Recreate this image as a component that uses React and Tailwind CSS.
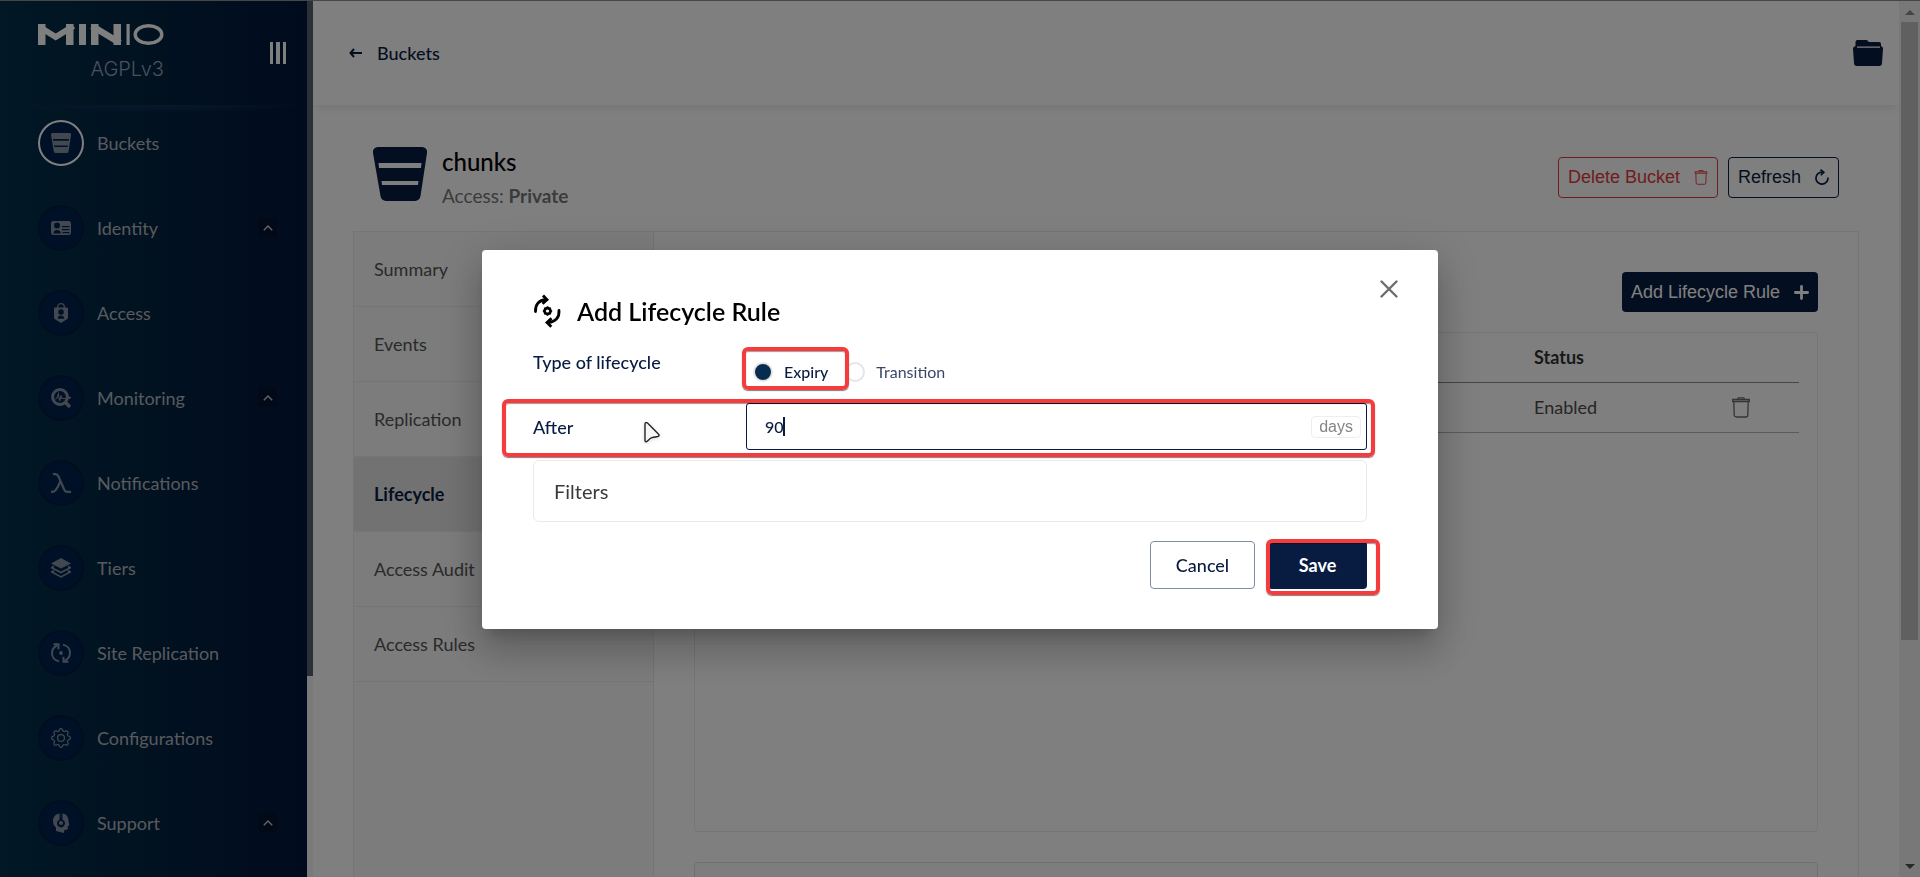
import React from "react";
import { BsGear } from "react-icons/bs";

const BucketIcon = ({ className }) => (
  <svg viewBox="0 0 54 54" className={className} fill="currentColor" aria-hidden="true">
    <path
      fillRule="evenodd"
      d="M5 0h44a5 5 0 0 1 5 6l-6.500 43a5.500 5.500 0 0 1-5.500 5H13a5.500 5.500 0 0 1-5.500-5L0 6a5 5 0 0 1 5-6zM5.500 16l.5 5h42l.500-5zM8.500 34l.5 4h36l.500-4z"
    />
  </svg>
);

const IdentityIcon = () => (
  <svg viewBox="0 0 20 20" className="size-5" fill="currentColor" aria-hidden="true">
    <path
      fillRule="evenodd"
      d="M2.500 3h15A2.500 2.500 0 0 1 20 5.500v9a2.500 2.500 0 0 1-2.500 2.500h-15A2.500 2.500 0 0 1 0 14.500v-9A2.500 2.500 0 0 1 2.500 3zM6 4.500a3 3 0 1 0 .01 6a3 3 0 0 0-.01-6zM2.500 15.500h7.300c0-2.200-1.600-3.500-3.800-3.500s-3.500 1.300-3.500 3.500zM11 8v1.200h7.500V8zM11 11v1.200h7.500V11zM11.500 14v1.200h7V14z"
    />
  </svg>
);

const AccessIcon = () => (
  <svg viewBox="0 0 20 20" className="size-5" fill="currentColor" aria-hidden="true">
    <path d="M6.700 5V3.600C6.700 1.800 8.200.7 10 .7s3.300 1.100 3.300 2.900V5" fill="none" stroke="currentColor" strokeWidth="1.300" />
    <path
      fillRule="evenodd"
      d="M4 4.400h12a1 1 0 0 1 1 1v9.300c0 .6-.2 1-.7 1.300L10 20l-6.300-4c-.5-.3-.7-.7-.7-1.300V5.400a1 1 0 0 1 1-1zM10 6.200a2.800 2.800 0 1 0 .01 5.600a2.800 2.800 0 0 0-.01-5.600zM6.800 15.800h6.400c0-2-1.200-3.200-3.200-3.200s-3.200 1.200-3.200 3.200z"
    />
  </svg>
);

const MonitoringIcon = () => (
  <svg viewBox="0 0 20 20" className="size-5" fill="none" stroke="currentColor" aria-hidden="true">
    <circle cx="9" cy="9" r="7.400" strokeWidth="3" />
    <path d="M14 14l5 5" strokeWidth="3.400" />
    <path d="M4.500 11l1.500-1 1.400-4 1.200 7 1.500-5 1 2.500h4l4-.500" strokeWidth="1.100" />
    <path d="M17 9.500h3" strokeWidth="1.500" />
  </svg>
);

const LambdaIcon = () => (
  <svg viewBox="0 0 20 20" className="size-5" fill="none" stroke="currentColor" strokeWidth="2.200" aria-hidden="true">
    <path d="M2 1.200h2.500c1.500 0 2.300.800 3 2.300l5.900 13.500c.7 1.500 1.600 1.900 3.100 1.900H20" />
    <path d="M9.300 8.500C7.500 13 5 18.800 1.800 18.800H0" />
  </svg>
);

const TiersIcon = () => (
  <svg viewBox="0 0 20 20" className="size-5" fill="none" stroke="currentColor" strokeWidth="1.700" aria-hidden="true">
    <path d="M10 0l10 5.400-10 5.200L0 5.400z" fill="currentColor" stroke="none" />
    <path d="M3 8.300L.8 9.700 10 14.500l9.200-4.800L17 8.300" />
    <path d="M3 12.500L.8 14 10 18.900l9.200-4.900-2.200-1.500" />
  </svg>
);

const ReplicationIcon = () => (
  <svg viewBox="0 0 20 20" className="size-5" fill="none" stroke="currentColor" strokeWidth="2" aria-hidden="true">
    <path d="M8 18.300C3.500 17.500 1 13.800 1 10.200 1 6.500 3 3.800 6.500 2" />
    <path d="M2.500 1.200h5v5" />
    <path d="M12 1.700c4.500.8 7 4.500 7 8.100 0 3.700-2 6.400-5.500 8.200" />
    <path d="M17.500 18.800h-5v-5" />
    <circle cx="10" cy="10" r="1.900" fill="currentColor" stroke="none" />
  </svg>
);

const GearIcon = () => <BsGear className="size-5" aria-hidden="true" />;

const SupportIcon = () => (
  <svg viewBox="0 0 20 20" className="size-5" fill="currentColor" aria-hidden="true">
    <path
      fillRule="evenodd"
      d="M8.500.5v6.200a4 4 0 1 0 3 0V.5c4 .5 6 3.500 6 7.500l.8 4.500-1.500.5v3.500l-3.600.5V20L5 18v-3.500C3 13 2 11 2 8 2 4 4.500 1 8.500.5z"
    />
    <path d="M10 8a2 2 0 1 0 .01 4a2 2 0 0 0-.01-4z" />
    <path d="M9.200 0h1.600v5H9.200z" opacity="0.200" />
  </svg>
);

const TrashIcon = ({ className }) => (
  <svg viewBox="0 0 18 21" className={className} fill="none" stroke="currentColor" strokeWidth="1.300" aria-hidden="true">
    <path d="M.7 2.500h16.600v2H.7z" />
    <path d="M5.500 2.200L6.200.8h5.600l.7 1.400" />
    <path d="M1.800 4.500l.4 13.500a2 2 0 0 0 2 2h9.600a2 2 0 0 0 2-2l.4-13.500" />
  </svg>
);

const Logo = () => (
  <svg viewBox="0 0 126 21" className="h-[21px] w-[126px]" fill="white" role="img" aria-label="MinIO">
    <rect x="0" y="0" width="7.500" height="21" />
    <rect x="28" y="0" width="7.500" height="21" />
    <polyline points="0,2 17.700,13 35.500,2" fill="none" stroke="white" strokeWidth="6" />
    <rect x="41" y="0" width="7" height="21" />
    <rect x="53" y="0" width="7.500" height="21" />
    <rect x="75.500" y="0" width="7.500" height="21" />
    <line x1="54" y1="2" x2="82" y2="19" stroke="white" strokeWidth="6.500" />
    <rect x="88.500" y="0" width="3.200" height="21" />
    <ellipse cx="110.500" cy="10.500" rx="13.300" ry="8.800" fill="none" stroke="white" strokeWidth="3.400" />
  </svg>
);

const LifecycleIcon = () => (
  <svg viewBox="0 0 28 34" className="h-[34px] w-7" fill="none" stroke="currentColor" strokeWidth="2.800" aria-hidden="true">
    <path d="M2.500 17.500C2 10.500 6 6 13 5.500" strokeLinecap="round" />
    <path d="M10 1.500l4 4.200-4.500 4" />
    <path d="M26 16.500C26.500 23.500 22.500 28 15.500 28.500" strokeLinecap="round" />
    <path d="M18.500 24.300l-4.500 4.200 4.300 4.300" />
    <circle cx="14.500" cy="17" r="3.100" strokeWidth="2.400" />
    <path d="M14.500 12.300v9.400M9.800 17h9.400M11.200 13.700l6.600 6.600M17.800 13.700l-6.600 6.600" strokeWidth="1.500" />
    <circle cx="14.500" cy="17" r="1.600" fill="white" stroke="none" />
  </svg>
);

const NAV = [
  { label: "Buckets", icon: () => <BucketIcon className="size-5" />, active: true },
  { label: "Identity", icon: IdentityIcon, group: true },
  { label: "Access", icon: AccessIcon },
  { label: "Monitoring", icon: MonitoringIcon, group: true },
  { label: "Notifications", icon: LambdaIcon },
  { label: "Tiers", icon: TiersIcon },
  { label: "Site Replication", icon: ReplicationIcon },
  { label: "Configurations", icon: GearIcon },
  { label: "Support", icon: SupportIcon, group: true },
];

const TABS = ["Summary", "Events", "Replication", "Lifecycle", "Access Audit", "Access Rules"];

function NavItem({ label, icon: Icon, active, group }) {
  return (
    <a href="#" className="flex h-[85px] shrink-0 items-center pr-[30px] pl-[38px] text-lg text-[#b0b4bc]">
      <span
        className={`flex size-[46px] shrink-0 items-center justify-center rounded-full border-2 bg-[#00204c] text-[#8290a0] ${
          active ? "border-white" : "border-[#001c40]"
        }`}
      >
        <Icon />
      </span>
      <span className="ml-[13px] grow">{label}</span>
      {group && (
        <span className="flex size-[19px] items-center justify-center rounded-xs bg-[#04122f] text-[#c4c8d0]">
          <svg viewBox="0 0 10 6" className="h-1.5 w-2.5" fill="none" stroke="currentColor" strokeWidth="1.400" aria-hidden="true">
            <path d="M.8 5.200L5 1l4.200 4.200" />
          </svg>
        </span>
      )}
    </a>
  );
}

function Sidebar() {
  return (
    <aside className="flex w-[313px] shrink-0">
      <div className="flex w-[307px] flex-col overflow-hidden bg-linear-to-r from-[#02304a] via-[#032341] to-[#02163c]">
        <div className="flex h-[104px] shrink-0 items-start justify-between pr-[21px] pl-[38px]">
          <div className="flex flex-col items-end pt-[23px]">
            <Logo />
            <span className="mt-2.5 font-[Inter] text-xl font-light text-[#97a2b4]">AGPLv3</span>
          </div>
          <button type="button" aria-label="Collapse menu" className="mt-[41px] flex h-[22px] gap-[3px]">
            <span className="w-[3px] bg-white" />
            <span className="w-[4px] bg-white" />
            <span className="w-[3px] bg-white" />
          </button>
        </div>
        <div className="h-2 shrink-0 bg-radial-[50%_100%_at_50%_0%] from-[#14305a] to-transparent" />
        <nav className="-mt-[13px] flex flex-col overflow-hidden">
          {NAV.map((item) => (
            <NavItem key={item.label} {...item} />
          ))}
        </nav>
      </div>
      <div className="w-1.5 bg-[#f4f4f4]">
        <div className="h-[77%] bg-[#575e70]" />
      </div>
    </aside>
  );
}

function BucketHeader() {
  return (
    <div className="flex h-[126px] shrink-0 items-center pt-3 pr-5 pl-5">
      <BucketIcon className="size-[54px] text-[#081c42]" />
      <div className="ml-[15px] grow pt-2">
        <h1 className="text-2xl leading-9 font-medium text-black">chunks</h1>
        <p className="text-[19px] leading-8 text-[#777]">
          Access: <strong className="font-bold">Private</strong>
        </p>
      </div>
      <div className="flex gap-2.5 pt-1.5 font-['Liberation_Sans',sans-serif] text-lg">
        <button type="button" className="flex h-[41px] items-center gap-3.5 rounded-sm border border-[#e03a3a] px-[9px] text-[#e03a3a]">
          Delete Bucket
          <TrashIcon className="h-[15px] w-[14px]" />
        </button>
        <button type="button" className="flex h-[41px] items-center gap-3.5 rounded-sm border border-[#081c42] px-[9px] text-[#081c42]">
          Refresh
          <svg viewBox="0 0 14 16" className="h-4 w-3.5" fill="none" stroke="currentColor" strokeWidth="1.700" aria-hidden="true">
            <path d="M12.900 8.500A6 6 0 1 1 7.500 3.200" />
            <path d="M5.500.7l3.300 2.600-3.100 2.900" />
          </svg>
        </button>
      </div>
    </div>
  );
}

function RulesTable() {
  return (
    <div className="mt-5 h-[500px] shrink-0 rounded-sm border border-[#eaeaea] px-[18px]">
      <table className="w-full table-fixed border-collapse text-left text-lg text-[#4c4c4c]">
        <colgroup>
          <col />
          <col className="w-[149px]" />
          <col className="w-[116px]" />
        </colgroup>
        <thead>
          <tr className="h-[49px] border-b border-[#8a8a8a] text-[#333]">
            <td />
            <th scope="col" className="font-bold">Status</th>
            <td />
          </tr>
        </thead>
        <tbody>
          <tr className="h-[50px] border-b border-[#b8b8b8]">
            <td />
            <td>Enabled</td>
            <td>
              <button type="button" aria-label="Delete rule" className="mx-auto block text-[#6a6a6a]">
                <TrashIcon className="h-[21px] w-[18px]" />
              </button>
            </td>
          </tr>
        </tbody>
      </table>
    </div>
  );
}

function Main() {
  return (
    <main className="flex min-w-0 grow flex-col overflow-hidden bg-white">
      <header className="flex h-[104px] shrink-0 items-center justify-between pr-4 pl-9 shadow-[0_2px_10px_rgba(0,0,0,0.1)]">
        <a href="#" className="flex items-center gap-[15px] text-lg font-medium text-[#081c42]">
          <svg viewBox="0 0 13 10" className="h-2.5 w-[13px]" fill="none" stroke="currentColor" strokeWidth="2" aria-hidden="true">
            <path d="M5 1L1.500 5 5 9M2 5h11" />
          </svg>
          Buckets
        </a>
        <button type="button" aria-label="Object browser" className="text-[#081c42]">
          <svg viewBox="0 0 30 26" className="h-[26px] w-[30px]" fill="currentColor" aria-hidden="true">
            <path
              fillRule="evenodd"
              d="M4.500 0h9c1.200 0 1.500 2 3 2H26a2 2 0 0 1 2 2v2a3 3 0 0 1 2 3l-1 14a3 3 0 0 1-3 3H4a3 3 0 0 1-3-3L0 9a3 3 0 0 1 2.500-3V2a2 2 0 0 1 2-2zM4 6.500v1.300h23V6.500z"
            />
          </svg>
        </button>
      </header>
      <div className="flex min-h-0 grow flex-col px-10">
        <BucketHeader />
        <section className="flex min-h-0 grow border border-b-0 border-[#eaeaea]">
          <ul className="w-[300px] shrink-0 border-r border-[#eaeaea] bg-[#f8f8f8] text-lg text-[#555]">
            {TABS.map((tab) => (
              <li key={tab} className="border-b border-[#eaeaea]">
                <a
                  href="#"
                  className={
                    tab === "Lifecycle"
                      ? "flex h-[74px] items-center bg-[#e5e5e5] pl-5 font-bold text-[#081c42]"
                      : "flex h-[74px] items-center pl-5"
                  }
                >
                  {tab}
                </a>
              </li>
            ))}
          </ul>
          <div className="flex min-w-0 grow flex-col overflow-hidden px-10 pt-10">
            <button
              type="button"
              className="flex h-10 shrink-0 items-center gap-3.5 self-end rounded-sm bg-[#081c42] px-[9px] font-['Liberation_Sans',sans-serif] text-lg text-white"
            >
              Add Lifecycle Rule
              <svg viewBox="0 0 15 15" className="size-[15px]" stroke="currentColor" strokeWidth="2.800" strokeLinecap="round" aria-hidden="true">
                <path d="M7.500 1.400v12.200M1.400 7.500h12.200" />
              </svg>
            </button>
            <RulesTable />
            <div className="mt-[30px] h-20 shrink-0 rounded-sm border border-[#e0e0e0] bg-[#fbfafa]" />
          </div>
        </section>
      </div>
    </main>
  );
}

function PageScrollbar() {
  return (
    <div className="flex w-[21px] shrink-0 flex-col items-center bg-[#f1f1f1]">
      <svg viewBox="0 0 10 5" className="mt-[9px] mb-[7px] h-[5px] w-2.5 shrink-0" fill="#8a8a8a" aria-hidden="true">
        <path d="M5 0l5 5H0z" />
      </svg>
      <div className="grow self-stretch px-0.5">
        <div className="h-[74%] bg-[#c1c1c1]" />
      </div>
      <svg viewBox="0 0 10 5" className="mt-[7px] mb-2 h-[5px] w-2.5 shrink-0" fill="#505050" aria-hidden="true">
        <path d="M5 5L0 0h10z" />
      </svg>
    </div>
  );
}

const Highlight = ({ className }) => (
  <span
    className={`pointer-events-none absolute rounded-md border-4 border-[#f53b3b] shadow-[0_1px_1px_rgba(0,0,0,0.5),inset_0_1px_1px_rgba(0,0,0,0.4)] ${className}`}
  />
);

function RadioOption({ id, label, checked }) {
  return (
    <span className="flex items-center">
      <input
        id={id}
        type="radio"
        name="lifecycle-type"
        defaultChecked={checked}
        className="size-5 appearance-none rounded-full border-2 border-[#e5e5e5] bg-white checked:bg-[#072c4f]"
      />
      <label htmlFor={id} className={`ml-[11px] text-base ${checked ? "font-medium text-[#081c42]" : "text-[#39476a]"}`}>
        {label}
      </label>
    </span>
  );
}

function LifecycleDialog() {
  return (
    <div
      role="dialog"
      aria-modal="true"
      aria-labelledby="dialog-title"
      className="relative w-full max-w-[956px] rounded-sm bg-white pt-[43px] pr-[71px] pb-10 pl-[51px] text-lg text-[#081c42] shadow-[0_11px_15px_-7px_rgba(0,0,0,0.2),0_24px_38px_3px_rgba(0,0,0,0.14),0_9px_46px_8px_rgba(0,0,0,0.12)]"
    >
      <button type="button" aria-label="Close" className="absolute top-[30px] right-10 text-[#6e6e6e]">
        <svg viewBox="0 0 18 18" className="size-[18px]" stroke="currentColor" strokeWidth="2.400" strokeLinecap="round" aria-hidden="true">
          <path d="M1.500 1.500l15 15M16.500 1.500l-15 15" />
        </svg>
      </button>
      <h2 id="dialog-title" className="flex h-9 items-center gap-4 text-[25px] font-semibold text-black">
        <LifecycleIcon />
        Add Lifecycle Rule
      </h2>
      <form onSubmit={(e) => e.preventDefault()}>
        <div role="radiogroup" aria-labelledby="type-label" className="flex h-[74px] items-start">
          <span id="type-label" className="w-[213px] pt-[19px] font-medium">Type of lifecycle</span>
          <div className="relative flex gap-[17px] pt-[31px] pl-[7px]">
            <RadioOption id="expiry" label="Expiry" checked />
            <RadioOption id="transition" label="Transition" />
            <Highlight className="top-[18px] -left-1 h-[43px] w-[107px]" />
          </div>
        </div>
        <div className="relative flex items-center">
          <label htmlFor="after" className="w-[213px] shrink-0 font-medium">After</label>
          <div className="flex h-[47px] grow items-center rounded-[3px] border border-[#081c42] pr-[5px] pl-[18px]">
            <div className="relative flex grow items-center">
              <input id="after" type="text" defaultValue="90" className="w-full text-base font-medium outline-none" />
              <span className="absolute left-[18px] h-[19px] w-0.5 bg-[#081c42]" />
            </div>
            <span className="rounded-sm border border-[#eee] px-[7px] font-['Liberation_Sans',sans-serif] text-base leading-5 text-[#858585]">days</span>
          </div>
          <Highlight className="-top-1 -right-2 -bottom-[7px] -left-[31px]" />
          <svg viewBox="0 0 16 21" className="absolute top-[19px] left-[111px] h-[21px] w-4 drop-shadow-sm" fill="#f6f6f6" stroke="#222" strokeWidth="1.400" aria-hidden="true">
            <path d="M1 2v16.500c0 1.500 1.200 1.800 2.200.8 1.200-1.200 2.500-2.800 4.500-3.600 2-.8 4.500-.9 6-1.100 1.500-.3 1.700-1.700.7-2.600L3.500 1C2.300.1 1 .5 1 2z" />
          </svg>
        </div>
        <button type="button" className="mt-2.5 flex h-[62px] w-full items-center rounded-md border border-[#eaeaea] pl-5 text-xl text-[#3a3a3a]">
          Filters
        </button>
        <div className="mt-[19px] flex justify-end gap-[13px]">
          <button type="button" className="h-12 w-[105px] rounded-sm border border-[#7f8ca5] font-medium">Cancel</button>
          <div className="relative">
            <button type="submit" className="h-12 w-[99px] rounded-sm bg-[#081c42] font-bold text-white">Save</button>
            <Highlight className="-top-0.5 -right-[13px] -bottom-1.5 -left-0.5" />
          </div>
        </div>
      </form>
    </div>
  );
}

export default function App() {
  return (
    <div className="relative flex h-screen overflow-hidden border-t border-[#8c8c8c] bg-white font-[Lato,sans-serif]">
      <Sidebar />
      <Main />
      <PageScrollbar />
      <div className="fixed inset-0 flex items-center justify-center bg-black/50 pt-0.5">
        <LifecycleDialog />
      </div>
    </div>
  );
}
